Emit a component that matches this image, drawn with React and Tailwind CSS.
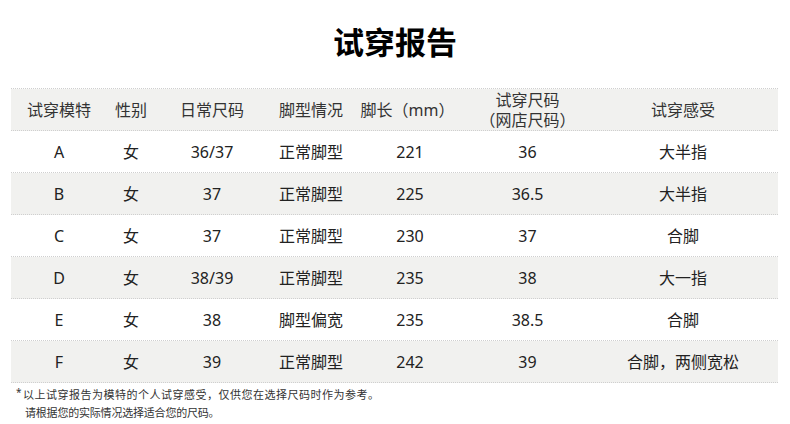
import React from 'react';

const font = { fontFamily: '"Noto Sans", "Noto Sans CJK SC", sans-serif' };

const rows = [
  ['A', '女', '36/37', '正常脚型', '221', '36', '大半指'],
  ['B', '女', '37', '正常脚型', '225', '36.5', '大半指'],
  ['C', '女', '37', '正常脚型', '230', '37', '合脚'],
  ['D', '女', '38/39', '正常脚型', '235', '38', '大一指'],
  ['E', '女', '38', '脚型偏宽', '235', '38.5', '合脚'],
  ['F', '女', '39', '正常脚型', '242', '39', '合脚，两侧宽松'],
];

const grid = 'grid grid-cols-[96px_48px_114px_84px_114px_121px_190px] items-center text-center';

const App = () => {
  return (
    <div className="w-[790px] h-[424px] bg-white overflow-hidden" style={font}>
      <h1 className="pt-[22px] h-[88px] text-center text-[31px] font-bold leading-[40px] text-black">试穿报告</h1>
      <div className="mx-[11px] w-[767px] border-t border-dotted border-[#cfcfcf]">
        <div className={`${grid} h-[42px] bg-[#f1f1ef] text-[16px] text-[#333] leading-[20px] border-b border-dotted border-[#cfcfcf]`}>
          <div>试穿模特</div>
          <div>性别</div>
          <div>日常尺码</div>
          <div>脚型情况</div>
          <div className="pr-[5px]">脚长（mm）</div>
          <div>试穿尺码<br />（网店尺码）</div>
          <div>试穿感受</div>
        </div>
        {rows.map((r, i) => (
          <div
            key={r[0]}
            className={`${grid} h-[42px] text-[16px] text-[#222] border-b border-dotted border-[#cfcfcf] ${i % 2 === 1 ? 'bg-[#f1f1ef]' : 'bg-white'}`}
          >
            {r.map((c, j) => (
              <div key={j}>{c}</div>
            ))}
          </div>
        ))}
      </div>
      <div className="pl-[16px] pt-[3px] text-[11px] leading-[18px] text-[#333]">
        <div className="flex">
          <span className="w-[7px] text-[10px] leading-[12px]">*</span>
          <span className="tracking-[0.5px]">以上试穿报告为模特的个人试穿感受，仅供您在选择尺码时作为参考。</span>
        </div>
        <div className="pl-[9px] tracking-[-0.2px]">请根据您的实际情况选择适合您的尺码。</div>
      </div>
    </div>
  );
};

export default App;
